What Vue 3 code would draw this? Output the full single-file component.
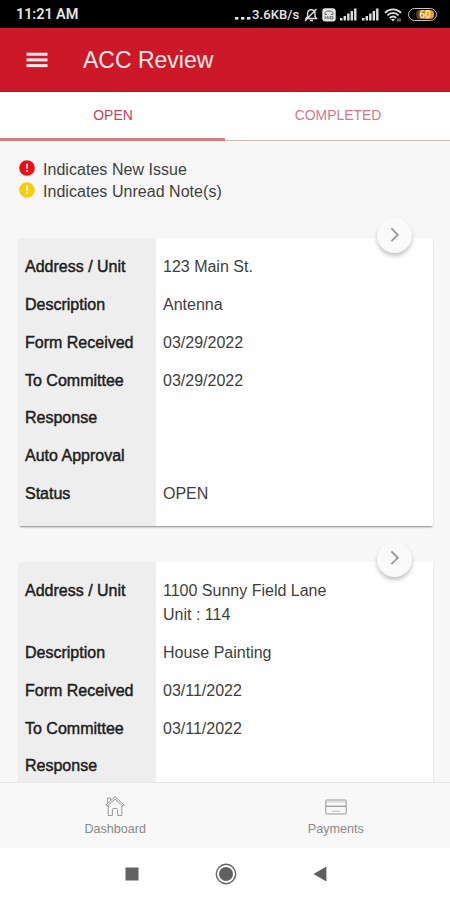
<script setup>
const cards = [
  {
    id: 1,
    rows: [
      ['Address / Unit', ['123 Main St.']],
      ['Description', ['Antenna']],
      ['Form Received', ['03/29/2022']],
      ['To Committee', ['03/29/2022']],
      ['Response', []],
      ['Auto Approval', []],
      ['Status', ['OPEN']],
    ],
  },
  {
    id: 2,
    rows: [
      ['Address / Unit', ['1100 Sunny Field Lane', 'Unit : 114']],
      ['Description', ['House Painting']],
      ['Form Received', ['03/11/2022']],
      ['To Committee', ['03/11/2022']],
      ['Response', []],
    ],
  },
]
const notices = [
  { kind: 'new', text: 'Indicates New Issue' },
  { kind: 'unread', text: 'Indicates Unread Note(s)' },
]
</script>

<template>
  <div class="screen">
    <div class="status">
      <span class="time">11:21 AM</span>
      <div class="indicators">
        <svg class="dots" width="16" height="4" viewBox="0 0 16 4" fill="#e4e4e4">
          <rect x="0" y="1" width="3.4" height="2.6" /><rect x="6" y="1" width="3.4" height="2.6" /><rect x="12" y="1" width="3.4" height="2.6" />
        </svg>
        <span class="speed">3.6KB/s</span>
        <svg class="bell" width="14" height="14" viewBox="0 0 14 14" fill="none" stroke="#ddd" stroke-width="1.4">
          <path d="M2 10.5h10.5L11 8.5V5c0-4.3-7-4.3-7.4 0v3.4zM6 12.5h3M1 13 12.5 1" />
        </svg>
        <svg class="sim" width="14" height="14" viewBox="0 0 14 14">
          <rect x="0.3" y="0.3" width="13.4" height="13.2" rx="3" fill="#e4e4e4" />
          <path d="M3 4.5c2-2 6-2 8 0M3 4.5v2h2M11 4.5v2H9M3.2 8.2v2.5L6 8.4v2.8M8 8.7v2.2h2.8V8.7z" fill="none" stroke="#666" stroke-width="1" />
        </svg>
        <svg v-for="n in 2" :key="n" class="signal" width="17" height="13" viewBox="0 0 17 13" fill="#dedede">
          <rect x="0" y="10" width="2.5" height="2.5" /><rect x="3.6" y="8" width="2.4" height="4.5" /><rect x="7.1" y="5.5" width="2.4" height="7" /><rect x="10.6" y="3" width="2.4" height="9.5" /><rect x="14.1" y="0.5" width="2.4" height="12" />
        </svg>
        <svg class="wifi" width="18" height="14" viewBox="0 0 18 14" fill="none" stroke="#ddd" stroke-width="1.9">
          <path d="M1 4.8c4.5-4.6 11.5-4.6 16 0M3.4 7.4c3.4-3.3 7.8-3.3 11.2 0M5.8 10c2-1.9 4.4-1.9 6.4 0" />
          <path d="m6.8 11 2.2 2.6 2.2-2.6z" fill="#ddd" stroke="none" /><path d="M14 10.5v3M16 10.5v3" stroke-width="0.9" />
        </svg>
        <div class="battery"><span class="charge">60</span></div>
      </div>
    </div>

    <header class="appbar">
      <svg class="menu" width="22" height="16" viewBox="0 0 22 16" fill="#fde9e7">
        <rect x="0.5" y="0.7" width="21" height="3" /><rect x="0.5" y="6.4" width="21" height="3" /><rect x="0.5" y="12.1" width="21" height="3" />
      </svg>
      <h1>ACC Review</h1>
    </header>

    <nav class="tabs">
      <div class="tab active">OPEN</div>
      <div class="tab">COMPLETED</div>
    </nav>

    <main class="content">
      <div class="legend">
        <div v-for="n in notices" :key="n.kind" class="notice">
          <svg class="mark" :class="n.kind" width="16" height="16" viewBox="0 0 16 16">
            <circle cx="8" cy="8" r="7.8" />
            <path d="M7 3.7h2l-.35 5.1h-1.3zM7.1 10.1h1.8v1.8H7.1z" fill="#fff" />
          </svg>
          <span>{{ n.text }}</span>
        </div>
      </div>

      <section v-for="card in cards" :key="card.id" class="card">
        <div class="go">
          <svg width="12" height="16" viewBox="0 0 12 16" fill="none" stroke="#969696" stroke-width="1.8"><path d="m2.4 1.4 6.4 6.4-6.4 6.4" /></svg>
        </div>
        <div v-for="row in card.rows" :key="row[0]" class="row">
          <div class="label">{{ row[0] }}</div>
          <div class="value"><div v-for="line in row[1]" :key="line">{{ line }}</div></div>
        </div>
      </section>
    </main>

    <footer class="bottom">
      <div class="item">
        <svg width="22" height="22" viewBox="0 0 22 22" fill="none" stroke="#999" stroke-width="1">
          <path d="M1.8 10 11 1.7l9.2 8.3-1.2 1.2-8-7.2-8 7.2zM3.5 7.8V3h3v2M4.2 10.8v9.7h4.2v-5.8q0-1.2 1.2-1.2h2.8q1.2 0 1.2 1.2v5.8h4.2v-9.7" />
        </svg>
        <span>Dashboard</span>
      </div>
      <div class="item">
        <svg width="22" height="22" viewBox="0 0 22 22" fill="none" stroke="#999" stroke-width="1">
          <rect x="0.8" y="5" width="20.4" height="14" rx="0.6" /><path d="M1 7h20" stroke="#c6c6c6" /><path d="M1 11.3h20" stroke-width="1.3" /><path d="M7 16.2h8" stroke="#bbb" />
        </svg>
        <span>Payments</span>
      </div>
    </footer>

    <div class="system">
      <svg width="14" height="14" viewBox="0 0 14 14"><rect x="0.5" y="0.5" width="13" height="13" fill="#626262" /></svg>
      <svg width="22" height="22" viewBox="0 0 22 22"><circle cx="11" cy="11" r="9.7" fill="none" stroke="#666" stroke-width="1.4" /><circle cx="11" cy="11" r="7" fill="#606060" /></svg>
      <svg width="14" height="16" viewBox="0 0 14 16"><path d="M0.5 8 13.4 0.5v15z" fill="#606060" /></svg>
    </div>
  </div>
</template>

<style>
body { margin: 0; background: #fff; overflow: hidden; }
</style>

<style scoped>
.screen {
  width: 450px;
  height: 900px;
  display: flex;
  flex-direction: column;
  overflow: hidden;
  background: #f7f7f7;
  font-family: "Liberation Sans", Arial, sans-serif;
  color: #3e3e3e;
}
.status {
  flex: none;
  height: 28px;
  box-sizing: border-box;
  padding: 1px 13px 0 16px;
  display: flex;
  align-items: center;
  justify-content: space-between;
  background: #000;
  color: #e6e6e6;
  font-family: Roboto, sans-serif;
  font-weight: 500;
}
.time { font-size: 14.5px; letter-spacing: -0.1px; font-weight: 600; }
.indicators { display: flex; align-items: center; }
.dots { margin: 6px 1px 0 0; }
.speed { width: 52px; font-size: 13px; letter-spacing: 0.1px; white-space: nowrap; }
.bell { margin-right: 4px; }
.sim { margin-right: 4px; }
.signal { margin-right: 5px; }
.wifi { margin-right: 6px; }
.battery {
  width: 29px;
  height: 13px;
  box-sizing: border-box;
  padding: 1px 2px;
  display: flex;
  justify-content: flex-end;
  border: 1.5px solid #c4c4c4;
  border-radius: 7px;
}
.charge {
  width: 18px;
  height: 9px;
  border-radius: 4px;
  background: linear-gradient(90deg, #4b2a0a, #eb9b24 55%);
  color: #fff1d2;
  font-size: 10px;
  line-height: 9px;
  text-align: center;
}
.appbar {
  flex: none;
  height: 64px;
  box-sizing: border-box;
  padding-left: 26px;
  display: flex;
  align-items: center;
  gap: 35px;
  background: #cc1828;
  border-bottom: 1px solid #bf1010;
}
h1 { margin: 1px 0 0; color: #fdeae6; font-size: 23px; font-weight: 400; line-height: 28px; }
.tabs { flex: none; display: flex; height: 49px; background: #fff; }
.tab {
  flex: 1;
  box-sizing: border-box;
  padding: 0 0 1px 1px;
  border-bottom: 1px solid #d2bcb0;
  text-align: center;
  font-size: 13.9px;
  line-height: 46px;
  color: #d4788a;
}
.tab.active { color: #c3435e; border-bottom: 3px solid #d47d80; }
.content { flex: 1; min-height: 0; overflow: hidden; padding: 18px 17px 0 19px; }
.legend { height: 79px; }
.notice { display: flex; align-items: center; gap: 8px; height: 22px; font-size: 16px; letter-spacing: 0.04px; line-height: 24px; }
.mark { margin-top: -4px; }
.new { fill: #f20b14; }
.unread { fill: #f7cd0d; }
.card {
  position: relative;
  margin-bottom: 36px;
  padding: 10.4px 0 13.35px;
  border-radius: 2px;
  background: linear-gradient(90deg, #eee 137px, #fff 137px);
  box-shadow: 0 2px 2px -1px rgba(0, 0, 0, 0.36), 0 1px 2px rgba(0, 0, 0, 0.13);
}
.row { display: flex; box-sizing: border-box; min-height: 37.75px; padding: 7px 0 6.75px; font-size: 16px; line-height: 24px; }
.label { width: 137px; box-sizing: border-box; padding-left: 6px; color: #202020; -webkit-text-stroke: 0.45px #202020; }
.value { padding-left: 7px; }
.go {
  position: absolute;
  top: -20px;
  right: 21px;
  width: 35px;
  height: 35px;
  display: flex;
  align-items: center;
  justify-content: center;
  border-radius: 50%;
  background: #fafafa;
  box-shadow: 0 3px 4px rgba(0, 0, 0, 0.23);
}
.go svg { margin-top: -2px; }
.bottom {
  flex: none;
  height: 66px;
  box-sizing: border-box;
  padding: 12px 4px 0 5px;
  display: flex;
  background: #f8f8f8;
  border-top: 1px solid #e6e6e6;
}
.item {
  flex: 1;
  display: flex;
  flex-direction: column;
  align-items: center;
  gap: 4px;
  color: #888;
  font-size: 12.6px;
  line-height: 17px;
}
.system { flex: none; height: 52px; box-sizing: border-box; padding-left: 2px; display: flex; align-items: center; justify-content: center; gap: 76px; background: #fff; }
</style>
